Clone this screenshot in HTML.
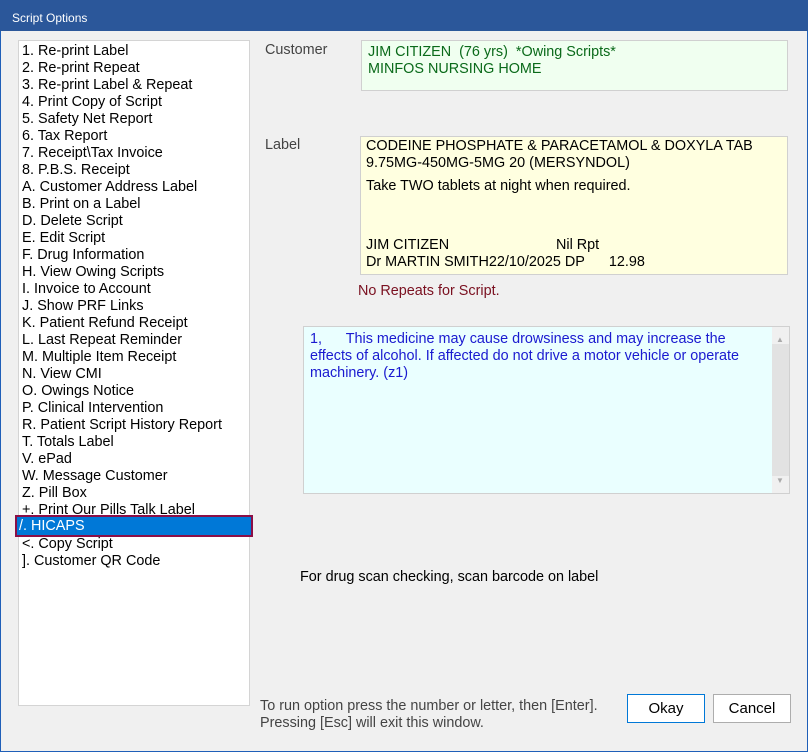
<html><head><style>
body{margin:0;width:808px;height:752px;background:#f0f0f0;font-family:"Liberation Sans",Arial,sans-serif;font-size:14.4px;position:relative;overflow:hidden}
.frame{position:absolute;left:0;top:0;width:806px;height:750px;border:1px solid #1f5fb8}
.title{position:absolute;left:0;top:0;width:808px;height:31px;background:#2b579a;color:#fff;font-size:12px;line-height:36px;padding-left:12px;box-sizing:border-box}
.abs{position:absolute}
.list{left:18px;top:40px;width:230px;height:664px;background:#fff;border:1px solid #d4d4d4}
.list div{height:17px;line-height:17px;padding-left:3px;white-space:nowrap;color:#000}
.sel{position:absolute;left:15px;top:515px;width:232px;height:18px;border:2px solid #8b0f47;background:#0078d7;color:#fff;line-height:18px;padding-left:2px}
</style></head><body>
<div class="frame"></div>
<div class="title">Script Options</div>
<div class="abs list"><div style="height:2px"></div>
<div>1. Re-print Label</div><div>2. Re-print Repeat</div><div>3. Re-print Label &amp; Repeat</div><div>4. Print Copy of Script</div><div>5. Safety Net Report</div><div>6. Tax Report</div><div>7. Receipt\Tax Invoice</div><div>8. P.B.S. Receipt</div><div>A. Customer Address Label</div><div>B. Print on a Label</div><div>D. Delete Script</div><div>E. Edit Script</div><div>F. Drug Information</div><div>H. View Owing Scripts</div><div>I. Invoice to Account</div><div>J. Show PRF Links</div><div>K. Patient Refund Receipt</div><div>L. Last Repeat Reminder</div><div>M. Multiple Item Receipt</div><div>N. View CMI</div><div>O. Owings Notice</div><div>P. Clinical Intervention</div><div>R. Patient Script History Report</div><div>T. Totals Label</div><div>V. ePad</div><div>W. Message Customer</div><div>Z. Pill Box</div><div>+. Print Our Pills Talk Label</div><div>&nbsp;</div><div>&lt;. Copy Script</div><div>]. Customer QR Code</div>
</div>
<div class="sel">/. HICAPS</div>
<div class="abs" style="left:265px;top:42px;color:#444">Customer</div>
<div class="abs" style="left:361px;top:40px;width:427px;height:51px;background:#f0fff0;border:1px solid #d0d0d0;color:#0a6a1a;padding:3px 6px;box-sizing:border-box;line-height:17px">JIM CITIZEN&nbsp; (76 yrs)&nbsp; *Owing Scripts*<br>MINFOS NURSING HOME</div>
<div class="abs" style="left:265px;top:137px;color:#444">Label</div>
<div class="abs" style="left:360px;top:136px;width:428px;height:139px;background:#ffffe0;border:1px solid #d0d0d0;padding:1px 5px;box-sizing:border-box;line-height:17px">CODEINE PHOSPHATE &amp; PARACETAMOL &amp; DOXYLA TAB<br>9.75MG-450MG-5MG 20 (MERSYNDOL)<div style="margin-top:6px">Take TWO tablets at night when required.</div><div style="margin-top:42px">JIM CITIZEN<span style="position:absolute;left:195px">Nil Rpt</span></div><div>Dr MARTIN SMITH22/10/2025 DP&nbsp;&nbsp;&nbsp;&nbsp;&nbsp; 12.98</div></div>
<div class="abs" style="left:358px;top:283px;color:#7a1020">No Repeats for Script.</div>
<div class="abs" style="left:303px;top:326px;width:487px;height:168px;background:#eaffff;border:1px solid #d0d0d0;box-sizing:border-box;color:#1a1ad0;padding:4px 40px 0 6px;line-height:17px">1,&nbsp;&nbsp;&nbsp;&nbsp;&nbsp; This medicine may cause drowsiness and may increase the effects of alcohol. If affected do not drive a motor vehicle or operate machinery. (z1)
<div class="abs" style="right:0;top:0;width:17px;height:166px;background:#f0f0f0"><div style="position:absolute;top:17px;left:0;width:17px;height:132px;background:#e2e2e2"></div><div style="position:absolute;top:4px;left:4px;font-size:8px;color:#aaa">▲</div><div style="position:absolute;bottom:4px;left:4px;font-size:8px;color:#aaa">▼</div></div></div>
<div class="abs" style="left:300px;top:569px">For drug scan checking, scan barcode on label</div>
<div class="abs" style="left:260px;top:698px;color:#444;line-height:17px">To run option press the number or letter, then [Enter].<br>Pressing [Esc] will exit this window.</div>
<div class="abs" style="left:627px;top:694px;width:78px;height:29px;border:1px solid #0078d7;background:#fff;box-sizing:border-box;text-align:center;line-height:27px;font-size:15px">Okay</div>
<div class="abs" style="left:713px;top:694px;width:78px;height:29px;border:1px solid #adadad;background:#fff;box-sizing:border-box;text-align:center;line-height:27px;font-size:15px">Cancel</div>
</body></html>
